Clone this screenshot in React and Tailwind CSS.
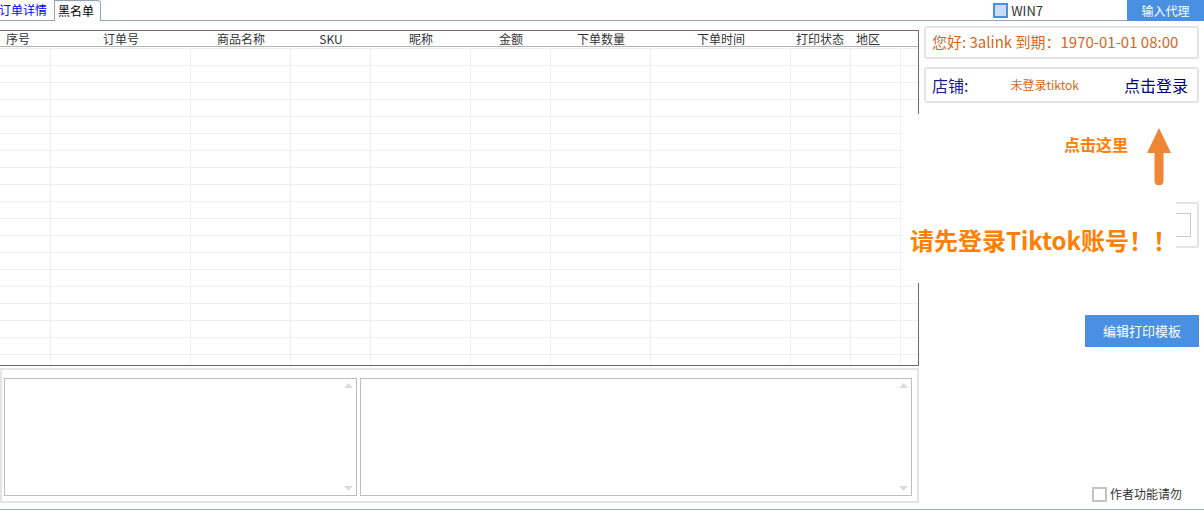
import React from "react";

/* column widths of the order grid (px) */
const COLS = [
  { label: "序号", w: "w-[51px]", pad: "pl-[6px]" },
  { label: "订单号", w: "w-[140px]", pad: "justify-center" },
  { label: "商品名称", w: "w-[100px]", pad: "justify-center" },
  { label: "SKU", w: "w-[80px]", pad: "justify-center" },
  { label: "昵称", w: "w-[100px]", pad: "justify-center" },
  { label: "金额", w: "w-[80px]", pad: "justify-center" },
  { label: "下单数量", w: "w-[100px]", pad: "justify-center" },
  { label: "下单时间", w: "w-[140px]", pad: "justify-center" },
  { label: "打印状态", w: "w-[60px]", pad: "pl-[5px]" },
  { label: "地区", w: "w-[50px]", pad: "pl-[5px]" },
];

const ROWS = Array.from({ length: 19 }, (_, i) => i);

function ScrollArrows() {
  return (
    <div className="flex flex-col justify-between h-full py-[4px] pr-[3px]">
      <svg width="9" height="5" viewBox="0 0 9 5"><path d="M4.5 0L9 5H0z" fill="#dcdcdc" /></svg>
      <svg width="9" height="5" viewBox="0 0 9 5"><path d="M0 0h9L4.5 5z" fill="#dcdcdc" /></svg>
    </div>
  );
}

function OrderGrid() {
  return (
    <div className="mt-[9px] h-[336px] border-t border-r border-b border-[#696969] overflow-hidden">
      {/* header */}
      <div className="flex h-[16px] border-b border-[#b4b4b4] text-[12px] leading-[15px] text-[#333]">
        {COLS.map((c) => (
          <div key={c.label} className={`${c.w} ${c.pad} flex shrink-0`}>{c.label}</div>
        ))}
      </div>
      {/* empty rows */}
      <div className="mt-[1px]">
        {ROWS.map((r) => (
          <div key={r} className="flex h-[17px] border-t border-[#efefef]">
            {COLS.map((c) => (
              <div key={c.label} className={`${c.w} shrink-0 border-r border-[#efefef]`} />
            ))}
            <div className="w-[18px] shrink-0" />
          </div>
        ))}
      </div>
    </div>
  );
}

export default function App() {
  return (
    <div
      className="relative w-[1204px] h-[523px] bg-white overflow-hidden"
      style={{ fontFamily: '"Noto Sans CJK SC", "Noto Sans", sans-serif' }}
    >
      {/* ── top bar ── */}
      <div className="flex h-[21px]">
        <div className="flex flex-1 items-end h-[21px] border-b border-[#8fa3b5]">
          <div className="h-[20px] w-[55px] -ml-[1px] text-[12px] leading-[20px] text-[#0000ff]">订单详情</div>
          <div className="h-[21px] w-[47px] border-t border-l border-r border-[#8fa3b5] rounded-tr-[4px] pl-[3px] text-[12px] leading-[19px] text-black -mb-[1px] bg-white">
            黑名单
          </div>
          <div className="ml-auto mr-[84px] flex items-center gap-[3px] h-[20px]">
            <span className="w-[15px] h-[15px] border-2 border-[#4a90e2] bg-[#c9dcf5]" />
            <span className="text-[13px] text-[#333] leading-none">WIN7</span>
          </div>
        </div>
        <button className="w-[77px] h-[21px] bg-[#4a90e2] text-white text-[12px] leading-[21px]">输入代理</button>
      </div>

      {/* ── main ── */}
      <div className="flex h-[489px] border-b border-[#9aa9b3]">
        {/* left: grid + text areas */}
        <div className="w-[919px] shrink-0">
          <OrderGrid />
          <div className="mt-[2px] h-[135px] border-2 border-[#e4e4e4] flex gap-[3px] pl-[2px] pr-[5px] pt-[8px]">
            <div className="w-[353px] h-[118px] border border-[#bdbdbd] flex justify-end">
              <ScrollArrows />
            </div>
            <div className="flex-1 h-[118px] border border-[#bdbdbd] flex justify-end">
              <ScrollArrows />
            </div>
          </div>
        </div>

        {/* right: account panel */}
        <div className="ml-[5px] w-[275px] flex flex-col">
          <div className="mt-[5px] h-[33px] border-2 border-[#e4e4e4] rounded-[3px] flex items-center pl-[6px] text-[15px] text-[#d2691e] whitespace-nowrap">
            您好: 3alink 到期：1970-01-01 08:00
          </div>
          <div className="mt-[8px] h-[36px] border-2 border-[#e4e4e4] rounded-[3px] flex items-center pl-[6px] pr-[9px]">
            <span className="text-[16px] text-[#1b1b8a]">店铺:</span>
            <span className="ml-[42px] text-[12px] text-[#d2691e]">未登录tiktok</span>
            <span className="ml-auto text-[16px] text-[#00007f]">点击登录</span>
          </div>
          <div className="mt-[99px] h-[46px] border-2 border-[#e4e4e4] rounded-[3px] flex items-center justify-end pr-[6px]">
            <div className="w-[120px] h-[24px] border border-[#c8c8c8]" />
          </div>
          <button className="mt-[67px] ml-auto w-[114px] h-[32px] bg-[#4a90e2] text-white text-[13px]">编辑打印模板</button>
          <div className="mt-auto mb-[6px] ml-[168px] flex items-center gap-[3px]">
            <span className="w-[15px] h-[15px] border-2 border-[#c4c4c4] bg-white" />
            <span className="text-[12px] text-[#333]">作者功能请勿</span>
          </div>
        </div>
      </div>

      {/* ── login hint overlay ── */}
      <div className="absolute left-[903px] top-[114px] w-[273px] h-[169px] bg-white">
        <div className="absolute left-[161px] top-[22px] text-[16px] font-bold text-[#ff8000] leading-none">点击这里</div>
        <svg className="absolute left-[243px] top-[14px]" width="26" height="57" viewBox="0 0 26 57">
          <path d="M13 0L25 25H17.5V53a4.5 4.5 0 0 1-9 0V25H1z" fill="#f08535" />
        </svg>
        <div className="absolute left-[7px] top-[114px] text-[24px] font-bold text-[#ff8000] whitespace-nowrap leading-none">
          请先登录Tiktok账号！！
        </div>
      </div>
    </div>
  );
}
